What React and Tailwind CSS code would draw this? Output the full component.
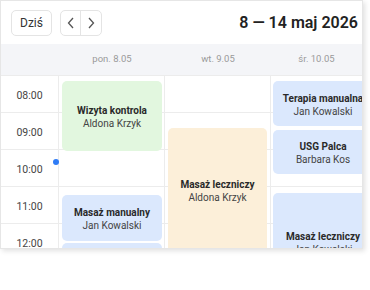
import React from "react";

const hours = ["08:00", "09:00", "10:00", "11:00", "12:00"];

function Event({ top, height, left, width, bg, title, name }) {
  return (
    <div
      className={`absolute rounded-[5px] ${bg} flex flex-col items-center justify-center text-center leading-[13px] pt-[2px]`}
      style={{ top, height, left, width }}
    >
      <div className="text-[10px] font-bold text-[#2a2a2a]">{title}</div>
      {name && <div className="text-[10px] text-[#444]">{name}</div>}
    </div>
  );
}

function Lines() {
  return (
    <div className="absolute inset-0 flex flex-col">
      {hours.map((h) => (
        <div key={h} className="h-[37px] shrink-0 border-b border-[#ececec]" />
      ))}
    </div>
  );
}

export default function App() {
  return (
    <div className="w-[370px] h-[290px] bg-white" style={{ fontFamily: "Roboto, 'Noto Sans', sans-serif" }}>
      <div className="w-[363px] h-[249px] overflow-hidden border border-[#e6e6e6] bg-white shadow-[2px_2px_5px_rgba(0,0,0,0.12)] flex flex-col">
        {/* header */}
        <div className="h-[43px] shrink-0 flex items-center pl-[10px] pr-[4px]">
          <button className="h-[26px] w-[41px] rounded-[5px] border border-[#e4e4e4] text-[12px] text-[#333] flex items-center justify-center">
            Dziś
          </button>
          <div className="ml-[8px] h-[26px] w-[42px] rounded-[5px] border border-[#e4e4e4] flex">
            <button className="w-1/2 flex items-center justify-center border-r border-[#e4e4e4] text-[#555]">
              <svg width="8" height="12" viewBox="0 0 8 12" fill="none" stroke="currentColor" strokeWidth="1.3"><path d="M6 1L1.5 6L6 11" /></svg>
            </button>
            <button className="w-1/2 flex items-center justify-center text-[#555]">
              <svg width="8" height="12" viewBox="0 0 8 12" fill="none" stroke="currentColor" strokeWidth="1.3"><path d="M2 1L6.5 6L2 11" /></svg>
            </button>
          </div>
          <div className="ml-auto text-[16px] font-semibold text-[#222]">8 — 14 maj 2026</div>
        </div>
        {/* day header */}
        <div className="h-[32px] shrink-0 bg-[#f4f5f8] grid grid-cols-[58px_106px_106px_1fr] text-[9.5px] text-[#9a9a9a] items-center border-b border-[#ececec]">
          <div />
          <div className="text-center">pon. 8.05</div>
          <div className="text-center">wt. 9.05</div>
          <div className="text-center">śr. 10.05</div>
        </div>
        {/* body */}
        <div className="flex-1 grid grid-cols-[58px_106px_106px_1fr] relative">
          <div className="relative border-r border-[#ececec]">
            <div className="flex flex-col">
              {hours.map((h) => (
                <div key={h} className="h-[37px] shrink-0 border-b border-[#ececec] flex items-center justify-center pt-[3px] text-[10.5px] text-[#444]">
                  {h}
                </div>
              ))}
            </div>
            <div className="absolute w-[6px] h-[6px] rounded-full bg-[#2f7cf6] right-[-1px] top-[83px]" />
          </div>
          <div className="relative border-r border-[#ececec]">
            <Lines />
            <Event top={5} height={70} left={3} width={100} bg="bg-[#e2f7df]" title="Wizyta kontrola" name="Aldona Krzyk" />
            <Event top={119} height={46} left={3} width={100} bg="bg-[#dbe8fd]" title="Masaż manualny" name="Jan Kowalski" />
            <Event top={167} height={40} left={3} width={100} bg="bg-[#dbe8fd]" title="" />
          </div>
          <div className="relative border-r border-[#ececec]">
            <Lines />
            <Event top={52} height={124} left={3} width={99} bg="bg-[#fcefd9]" title="Masaż leczniczy" name="Aldona Krzyk" />
          </div>
          <div className="relative">
            <Lines />
            <Event top={5} height={45} left={2} width={100} bg="bg-[#dbe8fd]" title="Terapia manualna" name="Jan Kowalski" />
            <Event top={54} height={44} left={2} width={100} bg="bg-[#dbe8fd]" title="USG Palca" name="Barbara Kos" />
            <Event top={117} height={98} left={2} width={100} bg="bg-[#dbe8fd]" title="Masaż leczniczy" name="Jan Kowalski" />
          </div>
        </div>
      </div>
    </div>
  );
}
